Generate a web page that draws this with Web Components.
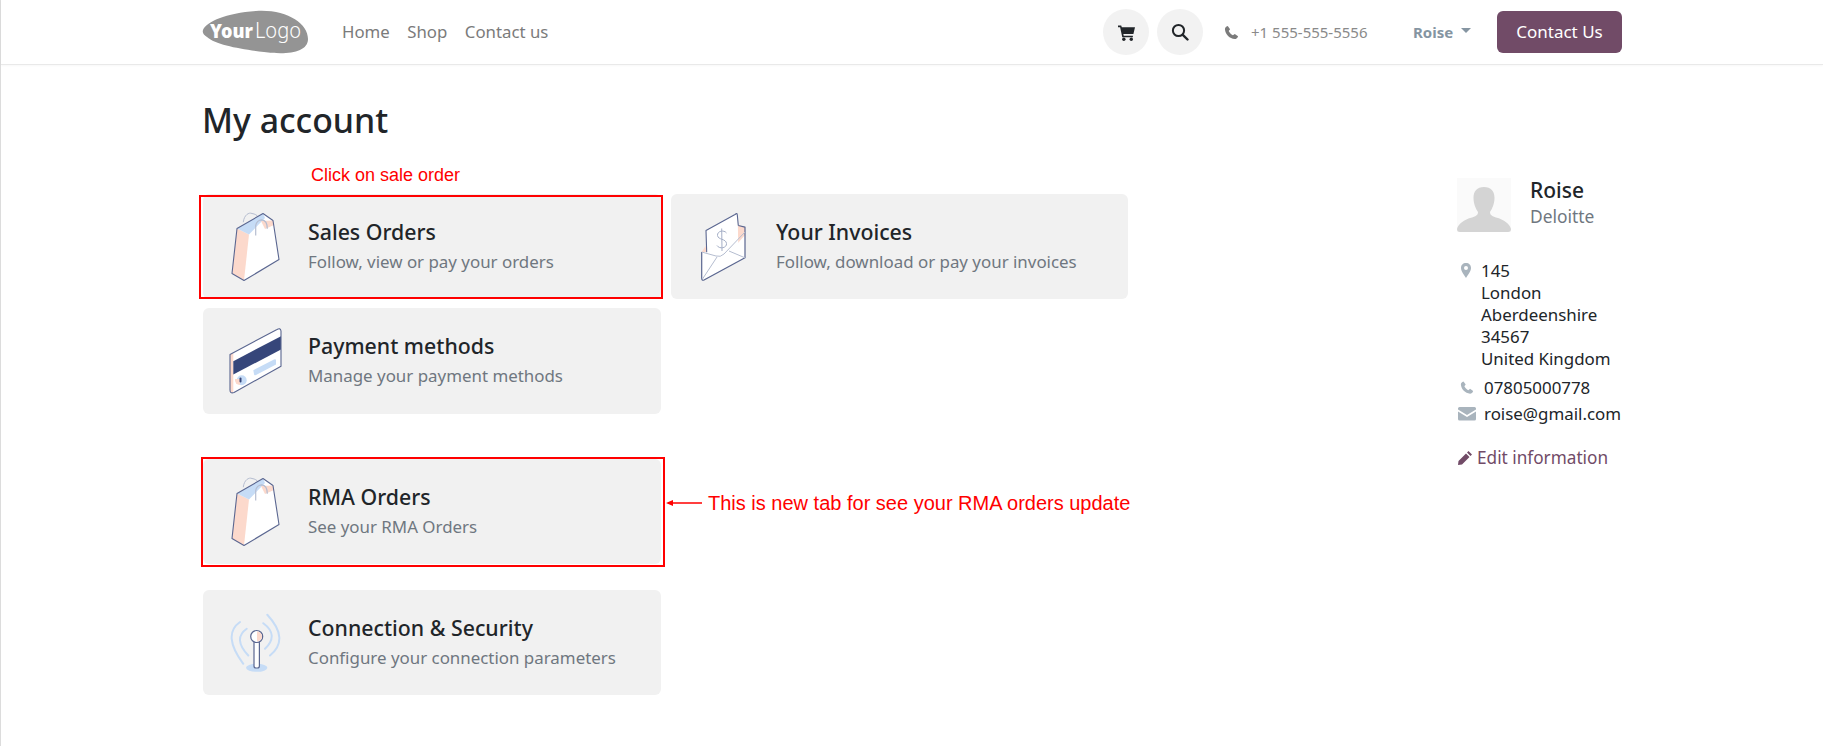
<!DOCTYPE html>
<html>
<head>
<meta charset="utf-8">
<title>My account</title>
<style>
  html, body { margin: 0; padding: 0; background: #fff; }
  body { font-family: "Noto Sans", "Open Sans", sans-serif; color: #212529; }
</style>
</head>
<body>
<account-page>
  <site-header slot="header"></site-header>
  <account-card icon="bag" heading="Sales Orders" text="Follow, view or pay your orders"></account-card>
  <account-card icon="invoice" heading="Your Invoices" text="Follow, download or pay your invoices"></account-card>
  <account-card icon="card" heading="Payment methods" text="Manage your payment methods"></account-card>
  <account-card slot="rma" icon="bag" heading="RMA Orders" text="See your RMA Orders"></account-card>
  <account-card slot="security" icon="antenna" heading="Connection &amp; Security" text="Configure your connection parameters"></account-card>
  <account-sidebar slot="side"></account-sidebar>
</account-page>

<script>
// account-page.js

const ICONS = {
  bag: `
    <path d="M9 15.5 L35 .5 L45 7.5 L51 46.5 L16 67.5 L4 60.5 Z" fill="#fff"/>
    <path d="M9 15.5 L21 21.5 L16 67.5 L4 60.5 Z" fill="#fcd9cc"/>
    <path d="M9 15.5 L35 .5 L37 5 L21 21.5 Z" fill="#c6dcf6"/>
    <path d="M33 8 L45 7.5 L46 12 L37 16 Z" fill="#fcd9cc"/>
    <path d="M15.3 9.2 C16 2 21 -1 24 .5 C27 1 29 2 30 4" fill="none" stroke="#b5bdd0" stroke-width="1"/>
    <path d="M27.7 22.5 L27.7 12.5 C28 9 31 6.8 33.7 6.8 C37 7 39.3 10 39.3 15.8" fill="none" stroke="#b5bdd0" stroke-width="1.2"/>
    <path d="M9 15.5 L35 .5 L45 7.5 L51 46.5 L16 67.5 L4 60.5 Z" fill="none" stroke="#5a6690" stroke-width="1.1" stroke-linejoin="round"/>`,
  invoice: `
    <path d="M5.7 39 L49 14 L49 44.8 L5.7 67.5 Z" fill="#fff"/>
    <path d="M5.7 39 L9.5 33 L11 39 Z" fill="#fcd9cc"/>
    <path d="M42 12 L49 14 L49 22 L42 30 Z" fill="#fcd9cc"/>
    <path d="M10 17.5 L41.3 -.2 L42.3 31 L24 43 L10.7 39.2 Z" fill="#fff"/>
    <path d="M10.7 39.2 L10 17.5 L39 1.5 Q41.3 -.5 41.3 2 L42.3 12.5" fill="none" stroke="#5a6690" stroke-width="1.1" stroke-linejoin="round"/>
    <path d="M42.3 12.5 L49 14.2 L49 44.8 L8 67 Q5.7 68 5.7 65 L5.7 39" fill="none" stroke="#5a6690" stroke-width="1.2" stroke-linejoin="round"/>
    <path d="M5.7 39 L20 43 Q24.5 44.5 28 41 L49 19 M6.5 66 L21 44 M33 38 L49 44.8" fill="none" stroke="#b5bdd0" stroke-width="1"/>
    <path d="M30.5 20 C28 16.5 21 18 21.5 22.5 C22 27 30 25.5 30.5 30.5 C31 35 23.5 36.5 21 32.5 M25.7 15.5 L26 38" fill="none" stroke="#a4aec6" stroke-width="1"/>`,
  card: `
    <path d="M2 27.5 L49 2.5 Q52.5 .5 53 4 L53 39.2 L6 65.5 Q2 67 2 63 Z" fill="#fff"/>
    <path d="M2 27.5 L5.3 26 L5.3 65 Q2 67 2 63 Z" fill="#fcd9cc"/>
    <path d="M5.3 34.2 L53 9.2 L53 22.5 L5.3 47.5 Z" fill="#36467a"/>
    <path d="M25.3 43.2 L46 32.5 Q48 31.5 48 33.5 L48 37.5 L28 48 Q26 49 26 47 Z" fill="#c6dcf6"/>
    <circle cx="13.7" cy="53.2" r="5" fill="#c6dcf6"/>
    <path d="M7 52 A 5 5 0 0 0 12 58 L 12 52 Z" fill="#fcd9cc"/>
    <rect x="11.5" y="50.5" width="2" height="5" rx="1" fill="#36467a"/>
    <path d="M2 27.5 L49 2.5 Q52.5 .5 53 4 L53 39.2 L6 65.5 Q2 67 2 63 Z" fill="none" stroke="#5a6690" stroke-width="1.1" stroke-linejoin="round"/>`,
  antenna: `
    <ellipse cx="28.7" cy="58.8" rx="10.7" ry="4" fill="#c6dcf6"/>
    <path d="M12 13 Q-6.25 25.7 15.3 54.8 M39.3 5.8 Q61.95 30.25 42 46.5" fill="none" stroke="#c6dcf6" stroke-width="2" stroke-linecap="round"/>
    <path d="M18.7 19.8 Q4.5 29.85 20.3 46.5 M35.3 14.2 Q51.25 26 37 39.8" fill="none" stroke="#c6dcf6" stroke-width="2" stroke-linecap="round"/>
    <rect x="26" y="32" width="5.4" height="27" rx="2" fill="#fff" stroke="#5a6690" stroke-width="1.2"/>
    <circle cx="28.7" cy="27.5" r="6" fill="#fff" stroke="#5a6690" stroke-width="1.2"/>
    <path d="M29 22.5 A5 5 0 0 1 29 32.5 Z" fill="#fcd9cc"/>`
};

class SiteHeader extends HTMLElement {
  connectedCallback() {
    this._root = this.attachShadow({ mode: "open" });
    this._root.innerHTML = `
      <style>
        :host { display: block; height: 64px; border-bottom: 1px solid #e9e9e9; box-shadow: 0 1px 2px rgba(0,0,0,.03); }
        .bar { width: 1420px; height: 64px; margin: 0 auto; display: flex; align-items: center; }
        .logo { width: 106px; height: 46px; margin-right: 34px; flex: none; }
        nav { display: flex; gap: 17.5px; font-size: 16.8px; color: #7b7b7b; padding-bottom: 2px; }
        .right { margin-left: auto; display: flex; align-items: center; }
        .circle { width: 46px; height: 46px; border-radius: 50%; background: #f2f2f2; display: flex; align-items: center; justify-content: center; margin-right: 8px; }
        .circle + .circle { margin-right: 0; }
        .phone { display: flex; align-items: center; margin-left: 21px; font-size: 15px; color: #8a8a8a; width: 189px; }
        .phone svg { margin-right: 12px; }
        .user { font-size: 15px; font-weight: 700; color: #8595a2; width: 84px; display: flex; align-items: center; }
        .caret { margin-left: 8px; margin-top: -4px; border: 5.5px solid transparent; border-top-color: #8595a2; border-bottom: 0; }
        .cta { width: 125px; height: 42px; box-sizing: border-box; padding-bottom: 2px; border-radius: 6px; background: #714b67; color: #fff; font-size: 17px; display: flex; align-items: center; justify-content: center; }
      </style>
      <div class="bar">
        <svg class="logo" viewBox="0 0 106 46">
          <path d="M1 21 C4 13 24 4 54 2 C84 0 106 14 106 30 C106 44 84 46 62 43 C38 40 14 36 5 28 C2 26 0 24 1 21 Z" fill="#949494"/>
          <text x="8" y="29" font-family="Noto Sans, sans-serif" font-size="20" font-weight="900" textLength="43" lengthAdjust="spacingAndGlyphs" fill="#fff">Your</text>
          <text x="53" y="29" font-family="Noto Sans, sans-serif" font-size="21" font-weight="300" textLength="46" lengthAdjust="spacingAndGlyphs" fill="#fff">Logo</text>
        </svg>
        <nav><span>Home</span><span>Shop</span><span>Contact us</span></nav>
        <div class="right">
          <div class="circle">
            <svg width="17" height="17" viewBox="0 0 16 16"><path d="M0 1.5 H3 L3.6 3 H16 L14.5 9.5 H5 L5.4 11 H14 V12.5 H4 L2 3 H0 Z" fill="#212529"/><circle cx="5.5" cy="14.3" r="1.6" fill="#212529"/><circle cx="12.5" cy="14.3" r="1.6" fill="#212529"/></svg>
          </div>
          <div class="circle">
            <svg width="18" height="18" viewBox="0 0 18 18"><circle cx="7.5" cy="7.5" r="5.6" fill="none" stroke="#212529" stroke-width="2"/><path d="M11.8 11.8 L16.5 16.5" stroke="#212529" stroke-width="2.4" stroke-linecap="round"/></svg>
          </div>
          <div class="phone">
            <svg width="15" height="15" viewBox="0 0 16 16"><path d="M4 1 L6.5 4.5 L5 6.5 C6 8.5 7.5 10 9.5 11 L11.5 9.5 L15 12 C14.5 14 13 15 11.5 15 C6 14.5 1.5 10 1 4.5 C1 3 2 1.5 4 1 Z" fill="#7b7b7b"/></svg>
            <span>+1 555-555-5556</span>
          </div>
          <div class="user"><span>Roise</span><i class="caret"></i></div>
          <div class="cta">Contact Us</div>
        </div>
      </div>
    `;
  }
}

class AccountCard extends HTMLElement {
  connectedCallback() {
    var icon = this.getAttribute("icon");
    var heading = this.getAttribute("heading");
    var text = this.getAttribute("text");
    this._root = this.attachShadow({ mode: "open" });
    this._root.innerHTML = `
      <style>
        :host { display: block; }
        .card { height: 100%; min-height: 105px; box-sizing: border-box; background: #f1f1f1; border-radius: 6px; display: flex; align-items: center; padding-left: 25px; }
        svg { width: 56px; height: 68px; flex: none; margin-right: 24px; overflow: visible; }
        .copy { padding-bottom: 1px; }
        h5 { margin: 0 0 5px; font-size: 21.3px; line-height: 26px; font-weight: 500; color: #212529; }
        p { margin: 0; font-size: 16.9px; line-height: 24px; color: #6f7780; }
      </style>
      <div class="card">
        <svg viewBox="0 0 56 68">${ICONS[icon]}</svg>
        <div class="copy">
          <h5>${heading}</h5>
          <p>${text}</p>
        </div>
      </div>
    `;
  }
}

class AccountSidebar extends HTMLElement {
  connectedCallback() {
    this._root = this.attachShadow({ mode: "open" });
    this._root.innerHTML = `
      <style>
        :host { display: block; font-size: 16.9px; line-height: 22px; color: #212529; }
        .who { display: flex; align-items: center; gap: 19px; margin-bottom: 28px; margin-left: -1px; }
        .who svg { flex: none; }
        .name { font-size: 21px; line-height: 28px; font-weight: 500; margin-top: -6px; }
        .org { color: #6f7780; line-height: 24px; font-size: 17.4px; }
        .row { display: flex; align-items: flex-start; white-space: nowrap; }
        .row svg { flex: none; margin-top: 3px; }
        .addr { margin-bottom: 7px; }
        .addr svg { margin: 3px 10px 0 3px; }
        .tel { margin-bottom: 4px; }
        .tel svg { margin-right: 10px; }
        .mail svg { margin-right: 8px; }
        .edit { margin-top: 22px; color: #714b67; font-size: 17.2px; }
        .edit svg { margin: 3px 4px 0 -1px; }
      </style>
      <div class="who">
        <svg width="54" height="54" viewBox="0 0 54 54"><rect width="54" height="54" fill="#fafafa"/><path d="M27 9 C34 9 37.5 13 37.5 20 C37.5 26 35 31 33 34 C33 37 35 38 39 39.5 C47 41.5 53 46 54 51 Q54 54 51 54 H3 Q0 54 0 51 C1 46 7 41.5 15 39.5 C19 38 21 37 21 34 C19 31 16.5 26 16.5 20 C16.5 13 20 9 27 9 Z" fill="#d4d4d4"/></svg>
        <div>
          <div class="name">Roise</div>
          <div class="org">Deloitte</div>
        </div>
      </div>
      <div class="row addr">
        <svg width="10" height="15" viewBox="0 0 10 15"><path fill-rule="evenodd" d="M5 0 C8 0 10 2 10 5 C10 8 7 12 5 15 C3 12 0 8 0 5 C0 2 2 0 5 0 Z M5 3 A2 2 0 1 0 5 7 A2 2 0 1 0 5 3 Z" fill="#a9b4bd"/></svg>
        <div>145<br>London<br>Aberdeenshire<br>34567<br>United Kingdom</div>
      </div>
      <div class="row tel">
        <svg style="margin-left:2px" width="14" height="15" viewBox="0 0 16 16"><path d="M4 1 L6.5 4.5 L5 6.5 C6 8.5 7.5 10 9.5 11 L11.5 9.5 L15 12 C14.5 14 13 15 11.5 15 C6 14.5 1.5 10 1 4.5 C1 3 2 1.5 4 1 Z" fill="#a9b4bd"/></svg>
        <span>07805000778</span>
      </div>
      <div class="row mail">
        <svg width="18" height="15" viewBox="0 0 18 15"><path d="M1.5 1 H16.5 Q18 1 18 2.5 V3.5 L9 9 L0 3.5 V2.5 Q0 1 1.5 1 Z M0 5.5 L9 11 L18 5.5 V13 Q18 14.5 16.5 14.5 H1.5 Q0 14.5 0 13 Z" fill="#a9b4bd"/></svg>
        <span>roise@gmail.com</span>
      </div>
      <div class="row edit">
        <svg width="16" height="16" viewBox="0 0 16 16"><path d="M11.5 1 L15 4.5 L13.5 6 L10 2.5 Z M9 3.5 L12.5 7 L5 14.5 L1 15 L1.5 11 Z" fill="#714b67"/></svg>
        <span>Edit information</span>
      </div>
    `;
  }
}

class AccountPage extends HTMLElement {
  connectedCallback() {
    this._root = this.attachShadow({ mode: "open" });
    this._root.innerHTML = `
      <style>
        :host { display: block; min-height: 746px; box-sizing: border-box; border-left: 1px solid #dcdcdc; font-family: "Noto Sans", "Open Sans", sans-serif; }
        .wrap { width: 1420px; margin: 0 auto; position: relative; display: flex; padding-top: 33px; }
        .main { width: 925px; padding-left: 1px; }
        h1 { margin: 0 0 52px -1px; font-size: 33.8px; line-height: 44px; font-weight: 500; color: #212529; }
        .grid { display: grid; grid-template-columns: 458px 457px; grid-template-rows: 105px 106px; column-gap: 10px; row-gap: 9px; }
        .single { width: 458px; margin-top: 45px; }
        .single + .single { margin-top: 26px; }
        .side { width: 164px; margin-left: auto; padding-top: 80px; }
        .mark { position: absolute; border: 2px solid #f00; box-sizing: border-box; }
        .note { position: absolute; color: #f00; font-family: "Liberation Sans", Arial, sans-serif; white-space: nowrap; }
        .arrow { position: absolute; left: 464px; top: 433px; }
      </style>
      <slot name="header"></slot>
      <div class="wrap">
        <div class="main">
          <h1>My account</h1>
          <div class="grid"><slot></slot></div>
          <div class="single"><slot name="rma"></slot></div>
          <div class="single"><slot name="security"></slot></div>
        </div>
        <div class="side"><slot name="side"></slot></div>

        <div class="note" style="left:109px;top:100px;font-size:18px">Click on sale order</div>
        <div class="mark" style="left:-3px;top:130px;width:464px;height:104px"></div>
        <div class="mark" style="left:-1px;top:392px;width:464px;height:110px"></div>
        <svg class="arrow" width="36" height="10" viewBox="0 0 36 10"><path d="M0 5 L7 2 V4.2 H36 V5.8 H7 V8 Z" fill="#f00"/></svg>
        <div class="note" style="left:506px;top:427px;font-size:20px">This is new tab for see your RMA orders update</div>
      </div>
    `;
  }
}

customElements.define("site-header", SiteHeader);
customElements.define("account-card", AccountCard);
customElements.define("account-sidebar", AccountSidebar);
customElements.define("account-page", AccountPage);
</script>
</body>
</html>
